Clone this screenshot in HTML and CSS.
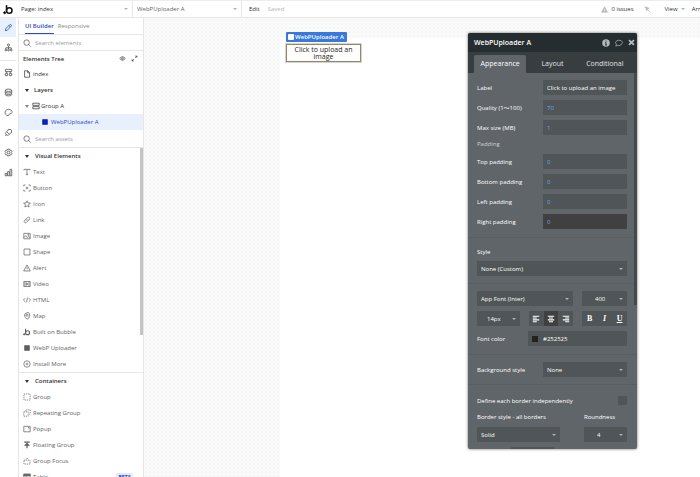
FILE: index.html
```html
<!DOCTYPE html>
<html lang="en">
<head>
<meta charset="utf-8">
<title>Bubble editor</title>
<link rel="stylesheet" href="styles.css">
</head>
<body>
<svg class="defs" aria-hidden="true">
  <symbol id="bubble" viewBox="0 0 10 10"><path d="M3.2 1v5" fill="none" stroke="currentColor" stroke-width="1.4"/><circle cx="5.7" cy="6" r="2.5" fill="none" stroke="currentColor" stroke-width="1.4"/><circle cx="1.5" cy="7.9" r=".9" fill="currentColor"/></symbol>
  <symbol id="pencil" viewBox="0 0 10 10"><path d="M1.500 8.500l.5-2.200L6.300 2q.8-.8 1.600 0t0 1.600L3.700 8zM5.500 2.800l1.700 1.700"/></symbol>
  <symbol id="flow" viewBox="0 0 10 10"><circle cx="5" cy="2.200" r="1.200"/><path d="M5 3.500v1.800M2 7V5.300h6V7M5 5.300V7"/><circle cx="2" cy="7.800" r="1"/><circle cx="5" cy="7.800" r="1"/><circle cx="8" cy="7.800" r="1"/></symbol>
  <symbol id="blocks" viewBox="0 0 10 10"><path d="M1.500 1.500h7v2.500h-7zM1.500 6h2.500v2.500H1.500zM6 6h2.500v2.500H6zM3 4v2M7 4v2"/></symbol>
  <symbol id="data" viewBox="0 0 10 10"><ellipse cx="5" cy="2.500" rx="3.500" ry="1.300"/><path d="M1.500 2.500v5q0 1.300 3.500 1.300t3.500-1.300v-5M1.500 4.300q0 1.200 3.500 1.200t3.500-1.200M1.500 6q0 1.200 3.500 1.200T8.500 6"/></symbol>
  <symbol id="palette" viewBox="0 0 10 10"><path d="M5 1.500c5 0 5 5 1.500 5C5 6.500 6 8.500 4.500 8.500 0 8.500 0 1.500 5 1.500z"/><path d="M3 4h.2M5 3h.2M7 4h.2M2.800 6H3"/></symbol>
  <symbol id="plug" viewBox="0 0 10 10"><path d="M1.300 8.700l1.500-1.500M3 4l3 3-1 1Q3.500 8.500 2.500 7.500T2 5zM3 4l2-2q2-1 3 0t0 3L6 7M5 2L4.500 1M8 5l1 .5"/></symbol>
  <symbol id="gear" viewBox="0 0 10 10"><path d="M4 1.200h2l.5 1.300 1.400-.1 1 1.700L8 5l.9 1-1 1.700-1.400-.2L6 8.800H4l-.5-1.300-1.400.2-1-1.700.9-1-.9-.9 1-1.700 1.400.1z"/><circle cx="5" cy="5" r="1.500"/></symbol>
  <symbol id="chart" viewBox="0 0 10 10"><path d="M1.300 6h1.900v2.700H1.300zM4 4h1.900v4.700H4zM6.700 1.500h1.900v7.200H6.700z"/></symbol>
  <symbol id="search" viewBox="0 0 10 10"><circle cx="4.500" cy="4.500" r="3.400"/><path d="M7 7l2.500 2.500"/></symbol>
  <symbol id="eye" viewBox="0 0 10 10"><path d="M1 5q4-5 8 0-4 5-8 0z"/><circle cx="5" cy="5" r="1.200"/></symbol>
  <symbol id="expand" viewBox="0 0 10 10"><path d="M6 1.500h2.500V4M8.500 1.500L5.800 4.200M1.500 6v2.500H4M1.500 8.500l2.700-2.700"/></symbol>
  <symbol id="page" viewBox="0 0 10 10"><path d="M2 1h4l2.200 2.200V9H2zM5.700 1v2.500h2.500"/></symbol>
  <symbol id="rows" viewBox="0 0 10 10"><path d="M1 1.500h8v2.700H1zM1 5.800h8v2.700H1z"/></symbol>
  <symbol id="text" viewBox="0 0 10 10"><path d="M1.200 3V1.700h7.600V3M5 1.700v6.600M3.500 8.300h3"/></symbol>
  <symbol id="button" viewBox="0 0 10 10"><path d="M1 3V1.200h2M7 1.200h2V3M9 7v1.800H7M3 8.800H1V7M5 3.300v3.400M3.300 5h3.400"/></symbol>
  <symbol id="star" viewBox="0 0 10 10"><path d="M5 1l1.200 2.700 3 .3-2.300 1.900.7 2.900L5 7.300 2.400 8.800l.7-2.900L.8 4l3-.3z"/></symbol>
  <symbol id="link" viewBox="0 0 10 10"><path d="M4 6q-1.200-1.200 0-2.300l1.700-1.800q1.300-1 2.400 0t0 2.400L6.800 5.600M6 4q1.200 1.200 0 2.300L4.300 8Q3 9.200 1.900 8t0-2.300l1.300-1.300"/></symbol>
  <symbol id="image" viewBox="0 0 10 10"><path d="M1 1.700h8v6.800H1zM1 7l2.500-2.500L5.500 7 7 5.700 9 7.500"/><circle cx="6.700" cy="3.700" r=".7"/></symbol>
  <symbol id="shape" viewBox="0 0 10 10"><path d="M1.300 1.300h7.400v7.400H1.300z"/></symbol>
  <symbol id="alert" viewBox="0 0 10 10"><path d="M5 1.200l4.200 7.500H.8zM5 4v2.400M5 7.200v.5"/></symbol>
  <symbol id="video" viewBox="0 0 10 10"><path d="M1 1.800h8v6.400H1zM2.500 1.800v6.400M7.500 1.800v6.400M4.200 3.500v3L6.300 5z"/></symbol>
  <symbol id="code" viewBox="0 0 10 10"><path d="M2.800 2.700L.5 5l2.300 2.300M7.200 2.700L9.500 5 7.200 7.300M5.800 2L4.200 8"/></symbol>
  <symbol id="map" viewBox="0 0 10 10"><path d="M5 9Q1.700 6 1.700 4T5 .9 8.300 4 5 9z"/><circle cx="5" cy="4" r="1.300"/></symbol>
  <symbol id="square" viewBox="0 0 10 10"><path d="M2 2h6v6H2z" fill="currentColor"/></symbol>
  <symbol id="more" viewBox="0 0 10 10"><circle cx="5" cy="5" r="4"/><path d="M3.500 5h3M5 3.500v3"/></symbol>
  <symbol id="group" viewBox="0 0 10 10"><path d="M1.200 1.200h7.600v7.600H1.200z" stroke-dasharray="1.500 1"/></symbol>
  <symbol id="repeat" viewBox="0 0 10 10"><path d="M1 3.500h5.500V9H1zM3.500 3V1H9v5.500H7" stroke-dasharray="1.500 1"/></symbol>
  <symbol id="popup" viewBox="0 0 10 10"><path d="M1 1.700h8v6.800H1zM6 3.300h1.500v1.500"/></symbol>
  <symbol id="float" viewBox="0 0 10 10"><path d="M1.500 1.500h7M5 9V4" stroke-width="1.500"/><path d="M2 5.500L5 2.500l3 3z" fill="currentColor"/></symbol>
  <symbol id="focus" viewBox="0 0 10 10"><path d="M1.200 4h7.600v4.800H1.200zM3.500 3L5 1.300 6.500 3" stroke-dasharray="1.500 1"/></symbol>
  <symbol id="table" viewBox="0 0 10 10"><path d="M1 1.500h8v7H1zM1 5.500h8M4 3v5.500"/><path d="M1 1.500h8v2H1z" fill="currentColor"/></symbol>
  <symbol id="warn" viewBox="0 0 10 10"><path d="M5 1l4.300 8H.7z" fill="currentColor"/><path d="M5 4v2.500M5 7.300v.8" stroke="#fff"/></symbol>
  <symbol id="cursor" viewBox="0 0 10 10"><path d="M1.500 1l6 2.300-2.400 1L4 6.800z" fill="currentColor"/><path d="M1 1l8 8" stroke-width="1.200"/></symbol>
  <symbol id="info" viewBox="0 0 10 10"><circle cx="5" cy="5" r="4.700" fill="currentColor" stroke="none"/><path d="M5 2v1.300M4 4.500h1v3M4 7.500h2.200" stroke="#262d30" stroke-width="1.200"/></symbol>
  <symbol id="chat" viewBox="0 0 10 10"><path d="M3 8l-2 1 .7-2Q-.5 4 2 2.300T8 2.300t0 4.500T3 8z"/></symbol>
  <symbol id="close" viewBox="0 0 10 10"><path d="M1.500 1.500l7 7M8.500 1.500l-7 7" stroke-width="2.600"/></symbol>
  <symbol id="left" viewBox="0 0 10 10"><path d="M1 1.500h8M1 3.800h5M1 6.100h8M1 8.400h5" stroke-width="1.400"/></symbol>
  <symbol id="center" viewBox="0 0 10 10"><path d="M1 1.500h8M2.500 3.800h5M1 6.100h8M2.500 8.400h5" stroke-width="1.400"/></symbol>
  <symbol id="right" viewBox="0 0 10 10"><path d="M1 1.500h8M4 3.800h5M1 6.100h8M4 8.400h5" stroke-width="1.400"/></symbol>
</svg>

<header class="topbar">
  <a class="logo" href="#" aria-label="Bubble"><svg class="icon large"><use href="#bubble"/></svg></a>
  <span class="select page-select"><select aria-label="Page"><option>Page: index</option></select></span>
  <span class="select element-select"><select aria-label="Element"><option>WebPUploader A</option></select></span>
  <button class="edit">Edit</button>
  <span class="saved">Saved</span>
  <div class="top-right">
    <button class="issues"><svg class="icon pale"><use href="#warn"/></svg>0 issues</button>
    <button class="pointer" aria-label="Pointer"><svg class="icon pale"><use href="#cursor"/></svg></button>
    <button class="view">View</button>
    <button class="arrange">Arrange</button>
  </div>
</header>

<div class="workspace">
  <nav class="rail">
    <a class="active" href="#" aria-label="Design"><svg class="icon"><use href="#pencil"/></svg></a>
    <a class="second" href="#" aria-label="Workflow"><svg class="icon"><use href="#flow"/></svg></a>
    <a href="#" aria-label="Components"><svg class="icon"><use href="#blocks"/></svg></a>
    <a href="#" aria-label="Data"><svg class="icon"><use href="#data"/></svg></a>
    <a href="#" aria-label="Styles"><svg class="icon"><use href="#palette"/></svg></a>
    <a href="#" aria-label="Plugins"><svg class="icon"><use href="#plug"/></svg></a>
    <a href="#" aria-label="Settings"><svg class="icon"><use href="#gear"/></svg></a>
    <a href="#" aria-label="Logs"><svg class="icon"><use href="#chart"/></svg></a>
  </nav>

  <aside class="sidebar">
    <div class="side-tabs"><button class="active">UI Builder</button><button>Responsive</button></div>
    <label class="search"><svg class="icon"><use href="#search"/></svg><input type="text" placeholder="Search elements" aria-label="Search elements"></label>
    <section class="tree">
      <div class="row tree-head"><h2>Elements Tree</h2><svg class="icon small"><use href="#eye"/></svg><svg class="icon small"><use href="#expand"/></svg></div>
      <div class="row"><svg class="icon"><use href="#page"/></svg>index</div>
      <div class="row heading"><i class="caret"></i>Layers</div>
      <div class="row nested"><i class="caret thin"></i><svg class="icon"><use href="#rows"/></svg>Group A</div>
      <div class="row selected"><svg class="icon"><use href="#square"/></svg>WebPUploader A</div>
    </section>
    <label class="search assets"><svg class="icon"><use href="#search"/></svg><input type="text" placeholder="Search assets" aria-label="Search assets"></label>
    <div class="palette">
      <div class="row heading"><i class="caret"></i>Visual Elements</div>
      <div class="row item"><svg class="icon"><use href="#text"/></svg>Text</div>
      <div class="row item"><svg class="icon"><use href="#button"/></svg>Button</div>
      <div class="row item"><svg class="icon"><use href="#star"/></svg>Icon</div>
      <div class="row item"><svg class="icon"><use href="#link"/></svg>Link</div>
      <div class="row item"><svg class="icon"><use href="#image"/></svg>Image</div>
      <div class="row item"><svg class="icon"><use href="#shape"/></svg>Shape</div>
      <div class="row item"><svg class="icon"><use href="#alert"/></svg>Alert</div>
      <div class="row item"><svg class="icon"><use href="#video"/></svg>Video</div>
      <div class="row item"><svg class="icon"><use href="#code"/></svg>HTML</div>
      <div class="row item"><svg class="icon"><use href="#map"/></svg>Map</div>
      <div class="row item"><svg class="icon"><use href="#bubble"/></svg>Built on Bubble</div>
      <div class="row item"><svg class="icon"><use href="#square"/></svg>WebP Uploader</div>
      <div class="row item"><svg class="icon"><use href="#more"/></svg>Install More</div>
      <div class="row heading divided"><i class="caret"></i>Containers</div>
      <div class="row item"><svg class="icon"><use href="#group"/></svg>Group</div>
      <div class="row item"><svg class="icon"><use href="#repeat"/></svg>Repeating Group</div>
      <div class="row item"><svg class="icon"><use href="#popup"/></svg>Popup</div>
      <div class="row item"><svg class="icon"><use href="#float"/></svg>Floating Group</div>
      <div class="row item"><svg class="icon"><use href="#focus"/></svg>Group Focus</div>
      <div class="row item"><svg class="icon"><use href="#table"/></svg>Table<span class="beta">BETA</span></div>
      <span class="side-scroll"></span>
    </div>
  </aside>

  <main class="canvas">
    <div class="artboard"></div>
    <div class="widget">
      <span class="tag"><i></i>WebPUploader A</span>
      <button class="uploader">Click to upload an image</button>
    </div>

    <section class="panel" aria-label="Property editor">
      <header class="panel-head">
        <h2>WebPUploader A</h2>
        <button aria-label="Info"><svg class="icon"><use href="#info"/></svg></button>
        <button aria-label="Comment"><svg class="icon"><use href="#chat"/></svg></button>
        <button aria-label="Close"><svg class="icon small"><use href="#close"/></svg></button>
      </header>
      <div class="panel-tabs"><button class="active">Appearance</button><button>Layout</button><button>Conditional</button></div>
      <div class="panel-body">
        <div class="group fields">
          <div class="field"><label for="label">Label</label><input id="label" class="light" type="text" value="Click to upload an image"></div>
          <div class="field"><label for="quality">Quality (1〜100)</label><input id="quality" type="text" value="70"></div>
          <div class="field"><label for="max">Max size (MB)</label><input id="max" type="text" value="1"></div>
          <p class="caption">Padding</p>
          <div class="field"><label for="pt">Top padding</label><input id="pt" type="text" value="0"></div>
          <div class="field"><label for="pb">Bottom padding</label><input id="pb" type="text" value="0"></div>
          <div class="field"><label for="pl">Left padding</label><input id="pl" type="text" value="0"></div>
          <div class="field"><label for="pr">Right padding</label><input id="pr" class="dark" type="text" value="0"></div>
        </div>
        <div class="group style-group">
          <label for="style">Style</label>
          <span class="select box"><select id="style"><option>None (Custom)</option></select></span>
        </div>
        <div class="group fonts">
          <div class="line">
            <span class="select box grow"><select aria-label="Font"><option>App Font (Inter)</option></select></span>
            <span class="select box narrow weight"><select aria-label="Weight"><option>400</option></select></span>
          </div>
          <div class="line">
            <span class="select box narrow"><select aria-label="Size"><option>14px</option></select></span>
            <div class="buttons align">
              <button aria-label="Align left"><svg class="icon"><use href="#left"/></svg></button>
              <button class="on" aria-label="Align center"><svg class="icon"><use href="#center"/></svg></button>
              <button aria-label="Align right"><svg class="icon"><use href="#right"/></svg></button>
            </div>
            <div class="buttons letters"><button><b>B</b></button><button><i>I</i></button><button><u>U</u></button></div>
          </div>
          <div class="field color"><label for="color">Font color</label><div class="swatch-box"><i></i><input id="color" type="text" value="#252525"></div></div>
        </div>
        <div class="group background">
          <div class="field"><label for="bg">Background style</label><span class="select box"><select id="bg"><option>None</option></select></span></div>
        </div>
        <div class="group borders">
          <div class="check"><label for="each">Define each border independently</label><input id="each" type="checkbox"></div>
          <div class="border-grid">
            <label for="bs">Border style - all borders</label><label for="round">Roundness</label>
            <span class="select box"><select id="bs"><option>Solid</option></select></span>
            <span class="select box narrow weight"><select id="round"><option>4</option></select></span>
          </div>
          <div class="next-field"></div>
        </div>
        <span class="panel-scroll"></span>
      </div>
    </section>
  </main>
</div>
</body>
</html>
```

FILE: styles.css
```css
* { box-sizing: border-box; }
html, body { height: 100%; }
body {
  margin: 0;
  display: flex;
  flex-direction: column;
  overflow: hidden;
  background: #fff;
  color: #333;
  font: 6px/8px "Open Sans", "Noto Sans", "Noto Sans CJK JP", sans-serif;
}
button, input, select { font: inherit; color: inherit; background: none; border: 0; padding: 0; margin: 0; border-radius: 0; outline: 0; }
button { white-space: nowrap; }
h2, p { margin: 0; font-size: inherit; }
.defs { position: absolute; width: 0; height: 0; }
.icon { width: 8px; height: 8px; flex: none; display: block; fill: none; stroke: currentColor; stroke-width: 0.9; }
.icon.small { width: 7px; height: 7px; }
.icon.large { width: 11px; height: 11px; }
.icon.pale { width: 7px; height: 7px; color: #bbb; }

.select { position: relative; display: flex; }
.select select { appearance: none; width: 100%; }
.select::after, .view::after {
  content: "";
  border: 2px solid transparent;
  border-top-color: #aab4ba;
  border-bottom: 0;
}
.select::after { position: absolute; right: 4px; top: 50%; margin-top: -1px; }

.topbar { display: flex; align-items: center; height: 18px; flex: none; border-top: 1px solid #eee; border-bottom: 1px solid #e6e6e6; }
.logo { width: 17px; display: flex; justify-content: center; color: #111; }
.page-select, .element-select { height: 16px; border-right: 1px solid #e6e6e6; }
.page-select { width: 116px; padding-left: 4px; }
.element-select { width: 109px; padding-left: 4px; color: #666; }
.edit { margin: 0 8px 0 7px; }
.saved { color: #b5b5b5; }
.top-right { margin-left: auto; margin-right: -14px; display: flex; align-items: center; }
.issues { display: flex; align-items: center; gap: 3px; margin-right: 10px; }
.pointer { margin-right: 14px; }
.view { display: flex; align-items: center; gap: 3px; margin-right: 7px; }

.workspace { flex: 1; min-height: 0; display: flex; }
.rail { width: 19px; flex: none; border-right: 1px solid #e6e6e6; color: #555; }
.rail .icon { width: 9px; height: 9px; }
.rail a { display: flex; align-items: center; justify-content: center; height: 20px; color: inherit; margin-right: 2px; }
.rail a.active { background: #e8f0fd; color: #2346c7; height: 19px; margin-bottom: 1px; }
.rail a.second { height: 23px; padding-bottom: 3px; border-bottom: 1px solid #e6e6e6; margin-bottom: 1px; }

.sidebar { width: 125px; flex: none; display: flex; flex-direction: column; border-right: 1px solid #e6e6e6; }
.side-tabs { display: flex; gap: 4px; height: 17px; padding-left: 6px; border-bottom: 1px solid #e6e6e6; color: #888; }
.side-tabs button { height: 16px; }
.side-tabs .active { color: #2a4bc8; font-weight: 600; border-bottom: 1px solid #2a4bc8; }
.search { display: flex; align-items: center; gap: 4px; height: 16px; padding-left: 4px; border-bottom: 1px solid #e6e6e6; color: #555; }
.search input { flex: 1; min-width: 0; }
.search input::placeholder { color: #999; }
.search.assets { height: 18px; }
.row { display: flex; align-items: center; height: 16px; flex: none; padding-left: 4px; gap: 2px; }
.tree .row { gap: 2px; }
.tree .tree-head { height: 15px; padding: 0 5px 0 4px; gap: 5px; }
.tree-head h2 { flex: 1; font-weight: 600; }
.heading { font-weight: 600; }
.caret { width: 4px; margin: 0 2px; border: 2px solid transparent; border-top: 3px solid #333; border-bottom: 0; }
.palette .heading { gap: 4px; }
.tree .heading { gap: 3px; }
.caret.thin { border-top-color: #888; }
.tree .nested { gap: 1px; }
.tree .selected { padding-left: 22px; background: #e8f0fd; color: #2a4bc8; }
.selected .icon { color: #0a22b5; }
.palette { position: relative; flex: 1; min-height: 0; overflow: hidden; }
.item { color: #5f5f5f; }
.divided { border-top: 1px solid #e6e6e6; height: 17px; }
.beta { margin-left: auto; margin-right: 10px; padding: 0 2px; border-radius: 2px; background: #dfeafc; color: #2346c7; font-size: 5px; font-weight: 700; }
.side-scroll { position: absolute; right: 0; top: 0; width: 3px; height: 187px; background: #c4c4c4; }

.canvas { position: relative; flex: 1; min-width: 0; background: #fafafa radial-gradient(#f5f5f5 1px, transparent 1px) 0 0 / 4px 4px; }
.artboard { position: absolute; left: 136px; top: 20px; right: 0; bottom: 0; background: #fff; }
.widget { position: absolute; left: 142px; top: 14px; width: 75px; }
.tag { display: inline-flex; align-items: center; gap: 1px; height: 10px; padding: 0 3px 0 2px; background: #3a78dc; border-radius: 1px; color: #fff; font-weight: 600; vertical-align: top; }
.tag i { width: 6px; height: 6px; border-radius: 1px; background: #fff; }
.uploader { display: block; width: 100%; height: 18px; margin-top: 2px; padding: 0 5px; border: 1px solid #a98153; outline: 1px solid #c6d8ef; background: #fff; color: #222; font-size: 7px; line-height: 7px; white-space: normal; }

.panel { position: absolute; right: 63px; top: 15px; width: 169px; height: 416px; display: flex; flex-direction: column; overflow: hidden; border-radius: 2px; background: #5f6569; color: #fff; box-shadow: 0 0 3px #0009; }
.panel-head { display: flex; align-items: center; gap: 5px; height: 19px; flex: none; padding: 0 2px 0 6px; background: #262d30; }
.panel-head h2 { flex: 1; font-size: 7px; font-weight: 600; }
.panel-head button { color: #b3b9bc; }
.panel-tabs { display: flex; height: 21px; flex: none; padding: 3px 6px 0; background: #383d40; }
.panel-tabs button { flex: 1; font-size: 7px; color: #e0e3e4; }
.panel-tabs .active { background: #5f6569; color: #fff; border-radius: 2px 2px 0 0; }
.panel-body { position: relative; flex: 1; min-height: 0; overflow: hidden; }
.group { padding: 7px 10px 8px 9px; border-bottom: 1px solid #585e62; }
.fields { display: flex; flex-direction: column; gap: 5px; }
.field { display: flex; align-items: center; height: 15px; }
.field label { flex: 1; }
.field input { width: 84px; height: 15px; padding-left: 4px; background: #505558; color: #6fa5f5; }
.field .light { color: #fff; }
.field .dark { background: #404040; }
.caption { height: 9px; color: #cdd0d2; }
.box { height: 15px; background: #505558; }
.box select { padding-left: 4px; }
.style-group { padding-top: 10px; padding-bottom: 7px; }
.style-group label { display: block; height: 13px; }
.fonts { display: flex; flex-direction: column; gap: 5px; }
.line { display: flex; gap: 9px; }
.grow { flex: 1; }
.narrow { width: 43px; }
.narrow select { padding-left: 10px; }
.weight { width: 45px; }
.weight select { padding-left: 13px; }
.buttons { display: flex; width: 45px; height: 15px; background: #505558; }
.align { margin-left: auto; }
.buttons button { flex: 1; display: flex; align-items: center; justify-content: center; }
.buttons .on { background: #404040; }
.letters { font: 8px/8px "Liberation Serif", serif; font-weight: 700; }
.swatch-box { display: flex; align-items: center; width: 99px; height: 15px; padding-left: 4px; background: #505558; }
.swatch-box i { width: 6px; height: 6px; background: #222; }
.field .swatch-box input { flex: 1; min-width: 0; padding-left: 5px; background: none; color: #fff; }
.background .box { width: 84px; }
.background { padding-bottom: 7px; }
.borders { padding-top: 11px; border: 0; }
.check { display: flex; align-items: center; height: 9px; }
.check label { flex: 1; }
.check input { appearance: none; width: 9px; height: 9px; background: #505558; }
.border-grid { display: grid; grid-template-columns: 83px 43px; justify-content: space-between; row-gap: 6px; margin-top: 8px; }
.border-grid .weight { width: 43px; }
.next-field { width: 43px; height: 15px; margin: 5px 0 0 34px; background: #505558; }
.panel-scroll { position: absolute; right: 0; top: 0; width: 3px; height: 232px; background: #44494c; }
```
